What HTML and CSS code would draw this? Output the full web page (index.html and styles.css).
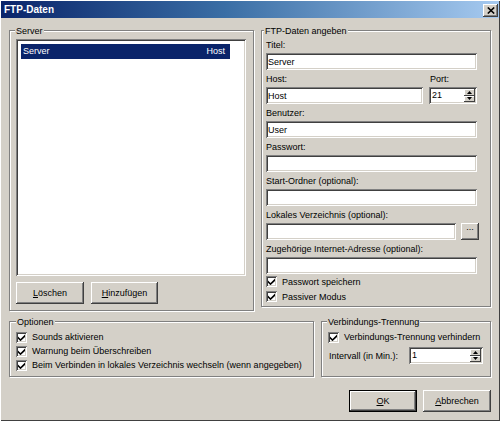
FILE: index.html
```html
<!DOCTYPE html>
<html lang="de">
<head>
<meta charset="utf-8">
<title>FTP-Daten</title>
<link rel="stylesheet" href="styles.css">
</head>
<body>
<div class="window">
  <div class="titlebar">
    <span class="title">FTP-Daten</span>
    <span class="close-btn"><svg width="8" height="7" viewBox="0 0 8 7"><path d="M0.8 0.5 L7.2 6.5 M7.2 0.5 L0.8 6.5" stroke="#000" stroke-width="1.6" fill="none"/></svg></span>
  </div>
  <div class="content">
    <div class="row-top">
      <div class="group group-server">
        <div class="legend">Server</div>
        <div class="listbox">
          <div class="list-row selected"><span>Server</span><span>Host</span></div>
        </div>
        <div class="btn-row">
          <button class="btn btn-delete"><u>L</u>öschen</button>
          <button class="btn btn-add"><u>H</u>inzufügen</button>
        </div>
      </div>
      <div class="group group-ftp">
        <div class="legend">FTP-Daten angeben</div>
        <div class="field field-first">
          <label class="label">Titel:</label>
          <input class="edit" value="Server">
        </div>
        <div class="field field-pair">
          <div class="sub sub-host">
            <label class="label">Host:</label>
            <input class="edit" value="Host">
          </div>
          <div class="sub sub-port">
            <label class="label">Port:</label>
            <div class="spin">
              <span class="spin-value">21</span>
              <span class="spin-btns">
                <span class="spin-btn"><svg width="5" height="3" viewBox="0 0 5 3"><polygon points="2.5,0 5,3 0,3" fill="#000"/></svg></span>
                <span class="spin-btn"><svg width="5" height="3" viewBox="0 0 5 3"><polygon points="0,0 5,0 2.5,3" fill="#000"/></svg></span>
              </span>
            </div>
          </div>
        </div>
        <div class="field">
          <label class="label">Benutzer:</label>
          <input class="edit" value="User">
        </div>
        <div class="field">
          <label class="label">Passwort:</label>
          <input class="edit" value="">
        </div>
        <div class="field">
          <label class="label">Start-Ordner (optional):</label>
          <input class="edit" value="">
        </div>
        <div class="field">
          <label class="label">Lokales Verzeichnis (optional):</label>
          <div class="browse-row">
            <input class="edit edit-local" value="">
            <button class="btn btn-browse">...</button>
          </div>
        </div>
        <div class="field">
          <label class="label">Zugehörige Internet-Adresse (optional):</label>
          <input class="edit" value="">
        </div>
        <div class="check-row check-row-tall">
          <span class="check"><svg width="7" height="7" viewBox="0 0 7 7"><polygon points="0,2.5 2.5,5 7,0.5 7,3 2.5,7.2 0,4.7" fill="#000"/></svg></span>
          <span class="check-text">Passwort speichern</span>
        </div>
        <div class="check-row check-row-tall">
          <span class="check"><svg width="7" height="7" viewBox="0 0 7 7"><polygon points="0,2.5 2.5,5 7,0.5 7,3 2.5,7.2 0,4.7" fill="#000"/></svg></span>
          <span class="check-text">Passiver Modus</span>
        </div>
      </div>
    </div>

    <div class="row-bottom">
      <div class="group group-options">
        <div class="legend">Optionen</div>
        <div class="check-row check-row-first">
          <span class="check"><svg width="7" height="7" viewBox="0 0 7 7"><polygon points="0,2.5 2.5,5 7,0.5 7,3 2.5,7.2 0,4.7" fill="#000"/></svg></span>
          <span class="check-text">Sounds aktivieren</span>
        </div>
        <div class="check-row">
          <span class="check"><svg width="7" height="7" viewBox="0 0 7 7"><polygon points="0,2.5 2.5,5 7,0.5 7,3 2.5,7.2 0,4.7" fill="#000"/></svg></span>
          <span class="check-text">Warnung beim Überschreiben</span>
        </div>
        <div class="check-row">
          <span class="check"><svg width="7" height="7" viewBox="0 0 7 7"><polygon points="0,2.5 2.5,5 7,0.5 7,3 2.5,7.2 0,4.7" fill="#000"/></svg></span>
          <span class="check-text">Beim Verbinden in lokales Verzeichnis wechseln (wenn angegeben)</span>
        </div>
      </div>
      <div class="group group-conn">
        <div class="legend">Verbindungs-Trennung</div>
        <div class="check-row check-row-first">
          <span class="check"><svg width="7" height="7" viewBox="0 0 7 7"><polygon points="0,2.5 2.5,5 7,0.5 7,3 2.5,7.2 0,4.7" fill="#000"/></svg></span>
          <span class="check-text">Verbindungs-Trennung verhindern</span>
        </div>
        <div class="interval-row">
          <span class="interval-label">Intervall (in Min.):</span>
          <div class="spin spin-interval">
            <span class="spin-value">1</span>
            <span class="spin-btns">
              <span class="spin-btn"><svg width="5" height="3" viewBox="0 0 5 3"><polygon points="2.5,0 5,3 0,3" fill="#000"/></svg></span>
              <span class="spin-btn"><svg width="5" height="3" viewBox="0 0 5 3"><polygon points="0,0 5,0 2.5,3" fill="#000"/></svg></span>
            </span>
          </div>
        </div>
      </div>
    </div>

    <div class="dialog-buttons">
      <button class="btn btn-dialog btn-default"><u>O</u>K</button>
      <button class="btn btn-dialog"><u>A</u>bbrechen</button>
    </div>
  </div>
</div>
</body>
</html>
```

FILE: styles.css
```css
html, body {
  margin: 0;
  padding: 0;
  background: #d4d0c8;
}

.window {
  width: 500px;
  height: 421px;
  box-sizing: border-box;
  padding: 1px;
  background: #d4d0c8;
  box-shadow: inset 1px 1px 0 #fff, inset -1px -1px 0 #404040;
  font-family: "Liberation Sans", Arial, sans-serif;
  font-size: 9px;
  color: #000;
  display: flex;
  flex-direction: column;
}

.titlebar {
  height: 17px;
  display: flex;
  align-items: flex-start;
  justify-content: space-between;
  padding: 0 1px 0 3px;
  background: linear-gradient(to right, #0a246a 0%, #3a6ea5 45%, #a6caf0 100%);
}

.title {
  color: #fff;
  font-weight: bold;
  font-size: 10px;
  line-height: 17px;
}

.close-btn {
  margin-top: 3px;
  width: 15px;
  height: 13px;
  background: #d4d0c8;
  box-shadow: inset -1px -1px 0 #404040, inset 1px 1px 0 #fff, inset -2px -2px 0 #808080;
  display: flex;
  align-items: center;
  justify-content: center;
}

.close-btn svg { display: block; }

.content {
  flex: 1;
  padding: 12px 8px 0 8px;
  display: flex;
  flex-direction: column;
}

/* group boxes */
.group {
  box-sizing: border-box;
  border: 1px solid #808080;
  box-shadow: inset 1px 1px 0 #fff, 1px 1px 0 #fff;
  display: flex;
  flex-direction: column;
}

.legend {
  align-self: flex-start;
  margin-top: -5px;
  padding: 0 1px;
  line-height: 11px;
  height: 11px;
  background: #d4d0c8;
  white-space: nowrap;
}

.row-top {
  display: flex;
  gap: 7px;
  align-items: flex-start;
}

.group-server {
  width: 245px;
  padding: 0 7px 6px 6px;
}

.group-server .legend { margin-left: -1px; }

.listbox {
  margin-top: 2px;
  height: 237px;
  box-sizing: border-box;
  padding: 5px;
  background: #fff;
  box-shadow: inset 1px 1px 0 #808080, inset -1px -1px 0 #fff, inset 2px 2px 0 #404040, inset -2px -2px 0 #d4d0c8;
}

.list-row {
  width: 209px;
  height: 15px;
  line-height: 15px;
  box-sizing: border-box;
  padding: 0 5px 0 2px;
  display: flex;
  justify-content: space-between;
}

.list-row.selected {
  background: #0a246a;
  color: #fff;
}

.btn-row {
  margin-top: 6px;
  display: flex;
  gap: 7px;
}

.btn {
  font-family: inherit;
  font-size: 9px;
  color: #000;
  background: #d4d0c8;
  border: 0;
  margin: 0;
  padding: 0;
  box-sizing: border-box;
  box-shadow: inset -1px -1px 0 #404040, inset 1px 1px 0 #fff, inset -2px -2px 0 #808080;
  display: flex;
  align-items: center;
  justify-content: center;
}

.btn-delete { width: 68px; height: 22px; }
.btn-add { width: 67px; height: 22px; }

.group-ftp {
  width: 230px;
  padding: 0 11px 2px 4px;
}

.group-ftp .legend { margin-left: -2px; }

.field { margin-top: 4px; display: flex; flex-direction: column; }
.field-first { margin-top: 3px; }

.label {
  display: block;
  line-height: 11px;
  height: 11px;
  margin-bottom: 2px;
  white-space: nowrap;
}

.edit {
  width: 211px;
  height: 17px;
  box-sizing: border-box;
  border: 0;
  margin: 0;
  padding: 0 2px;
  font-family: inherit;
  font-size: 9px;
  color: #000;
  background: #fff;
  outline: none;
  box-shadow: inset 1px 1px 0 #808080, inset -1px -1px 0 #fff, inset 2px 2px 0 #404040, inset -2px -2px 0 #d4d0c8;
}

.field-pair {
  flex-direction: row;
  gap: 6px;
}

.sub { display: flex; flex-direction: column; }
.sub-host .edit { width: 157px; }
.sub-port .label { padding-left: 1px; }

.spin {
  width: 48px;
  height: 17px;
  box-sizing: border-box;
  padding: 2px;
  background: #fff;
  box-shadow: inset 1px 1px 0 #808080, inset -1px -1px 0 #fff, inset 2px 2px 0 #404040, inset -2px -2px 0 #d4d0c8;
  display: flex;
}

.spin-interval { width: 74px; }

.spin-value {
  flex: 1;
  line-height: 13px;
  padding-left: 1px;
}

.spin-btns {
  width: 11px;
  display: flex;
  flex-direction: column;
}

.spin-btn {
  flex: 1;
  background: #d4d0c8;
  box-shadow: inset -1px -1px 0 #404040, inset 1px 1px 0 #fff;
  display: flex;
  align-items: center;
  justify-content: center;
}

.spin-btn svg { display: block; }

.browse-row {
  display: flex;
  gap: 5px;
}

.edit-local { width: 190px; }

.btn-browse {
  width: 18px;
  height: 17px;
  line-height: 17px;
  align-items: flex-end;
  padding-bottom: 4px;
}

/* check boxes */
.check-row {
  display: flex;
  align-items: center;
  gap: 5px;
  height: 14px;
  white-space: nowrap;
}

.check-row-tall { height: 15px; }

.check {
  width: 11px;
  height: 11px;
  flex: none;
  box-sizing: border-box;
  padding: 2px;
  background: #fff;
  box-shadow: inset 1px 1px 0 #808080, inset -1px -1px 0 #fff, inset 2px 2px 0 #404040, inset -2px -2px 0 #d4d0c8;
}

.check svg { display: block; }

.check-text { line-height: 12px; }

.row-bottom {
  margin-top: 10px;
  display: flex;
  gap: 7px;
}

.group-options {
  width: 305px;
  padding: 0 6px 4px 6px;
}

.group-options .legend { margin-left: 0; }

.check-row-first { margin-top: 2px; }

.group-conn {
  width: 170px;
  padding: 0 6px 4px 6px;
}

.group-conn .legend { margin-left: -1px; }

.interval-row {
  margin-top: 3px;
  display: flex;
  align-items: center;
}

.interval-label {
  width: 80px;
  margin-left: 1px;
  white-space: nowrap;
}

.dialog-buttons {
  margin-top: 13px;
  display: flex;
  justify-content: flex-end;
  gap: 6px;
}

.btn-dialog { width: 68px; height: 22px; }

.btn-default {
  box-shadow: inset 0 0 0 1px #000, inset -2px -2px 0 #404040, inset 2px 2px 0 #fff, inset -3px -3px 0 #808080;
}
```
